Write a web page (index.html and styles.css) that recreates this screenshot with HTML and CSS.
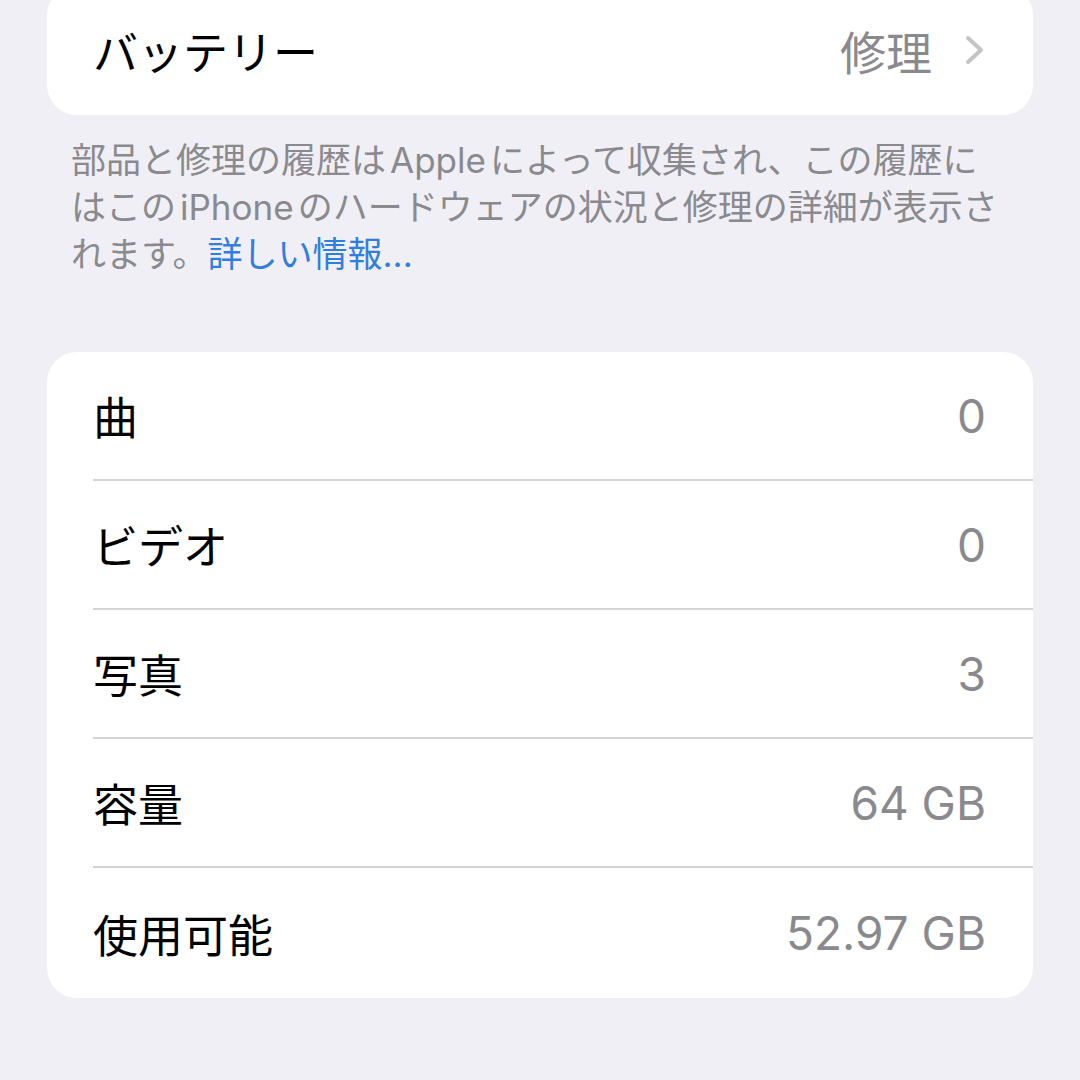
FILE: index.html
```html
<!DOCTYPE html>
<html lang="ja">
  <head>
    <meta charset="UTF-8" />
    <title>情報</title>
    <link rel="stylesheet" href="styles.css">
  </head>
  <body>
    <div class="page">
      <section class="group group-top">
        <div class="row">
          <span class="label">バッテリー</span>
          <span class="value">
            修理
            <svg class="chevron" width="22" height="30" viewBox="0 0 22 30">
              <path d="M4 3 L17 15 L4 27" fill="none" stroke="#c4c4c7" stroke-width="4" stroke-linecap="round" stroke-linejoin="round" />
            </svg>
          </span>
        </div>
      </section>

      <div class="footnote">
        <p class="line">部品と修理の履歴は<span class="latin">Apple</span>によって収集され、この履歴に</p>
        <p class="line">はこの<span class="latin">iPhone</span>のハードウェアの状況と修理の詳細が表示さ</p>
        <p class="line">れます。<a href="#" class="link">詳しい情報...</a></p>
      </div>

      <section class="group">
        <div class="row">
          <span class="label">曲</span>
          <span class="value">0</span>
        </div>
        <div class="row">
          <span class="label">ビデオ</span>
          <span class="value">0</span>
        </div>
        <div class="row">
          <span class="label">写真</span>
          <span class="value">3</span>
        </div>
        <div class="row">
          <span class="label">容量</span>
          <span class="value">64 GB</span>
        </div>
        <div class="row">
          <span class="label">使用可能</span>
          <span class="value">52.97 GB</span>
        </div>
      </section>
    </div>
  </body>
</html>
```

FILE: styles.css
```css
body {
  margin: 0;
  background: #f0eff5;
  font-family: "Inter", "Noto Sans CJK JP", sans-serif;
  color: #000;
  overflow: hidden;
}

.page {
  padding: 0 47px;
  display: flex;
  flex-direction: column;
}

.group {
  background: #fff;
  border-radius: 30px;
  display: flex;
  flex-direction: column;
  overflow: hidden;
}

.group-top {
  margin-top: -15px;
}

.row {
  height: 129px;
  display: flex;
  align-items: center;
  justify-content: space-between;
  margin-left: 46px;
  padding-right: 47px;
  border-bottom: 2px solid #d4d4d7;
  box-sizing: border-box;
}

.row:last-child {
  border-bottom: none;
  height: 130px;
}

.label {
  font-size: 45px;
}

.value {
  font-size: 46px;
  color: #8a8a8e;
  display: flex;
  align-items: center;
  gap: 32px;
}

.chevron {
  display: block;
}

.footnote {
  margin-top: 22px;
  padding: 0 24px;
  height: 215px;
  font-size: 35px;
  line-height: 47px;
  color: #8a8a8e;
}

.line {
  margin: 0;
  white-space: nowrap;
}

.latin {
  margin: 0 4px;
}

.link {
  color: #2f7ee0;
  text-decoration: none;
}
```
